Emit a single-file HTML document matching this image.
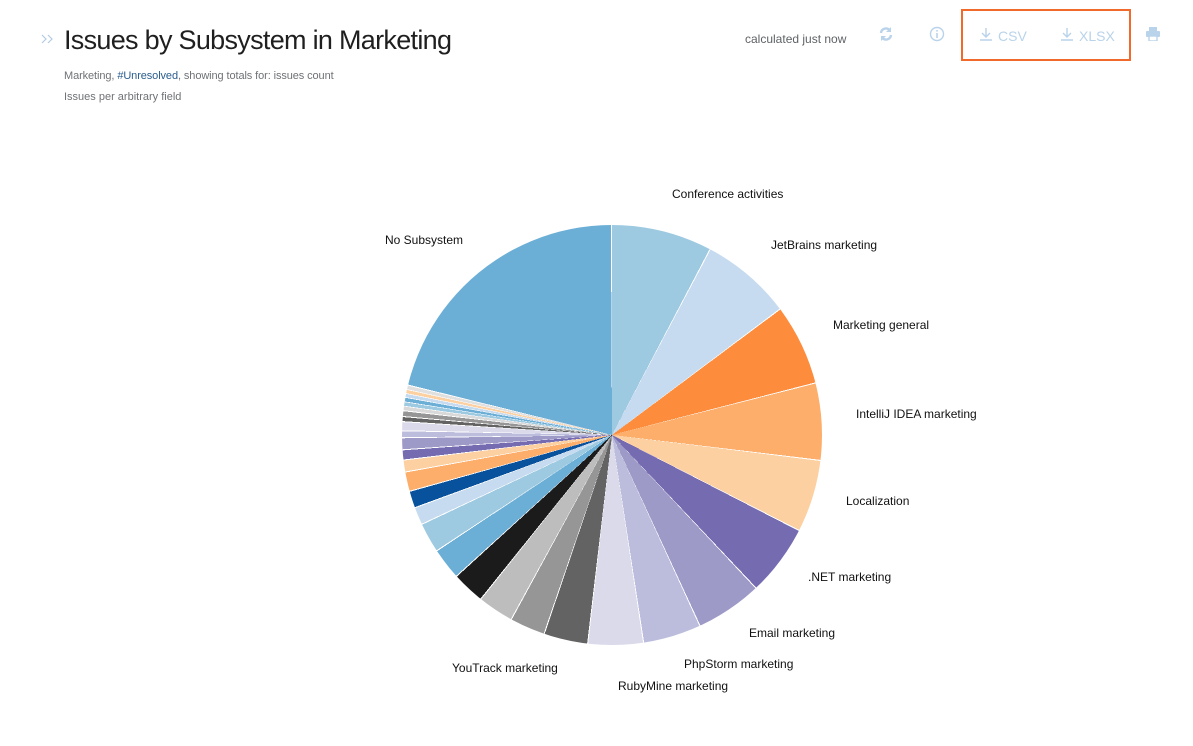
<!DOCTYPE html>
<html><head><meta charset="utf-8"><style>
body{margin:0;width:1193px;height:746px;background:#fff;font-family:"Liberation Sans",sans-serif;position:relative;overflow:hidden}
.a{position:absolute;white-space:nowrap}
.lbl{position:absolute;font-size:12px;color:#111;white-space:nowrap;line-height:14px}
.pie{position:absolute;left:402px;top:225px;width:420px;height:420px;border-radius:50%;
background:conic-gradient(from 0deg,
#9ecae1 0deg 27.7deg,#fff 27.7deg 28deg,
#c6dbef 28deg 53deg,#fff 53deg 53.3deg,
#fd8d3c 53.3deg 75.5deg,#fff 75.5deg 75.8deg,
#fdae6b 75.8deg 96.8deg,#fff 96.8deg 97.1deg,
#fdd0a2 97.1deg 116.9deg,#fff 116.9deg 117.2deg,
#756bb1 117.2deg 136.6deg,#fff 136.6deg 136.9deg,
#9e9ac8 136.9deg 155.1deg,#fff 155.1deg 155.4deg,
#bcbddc 155.4deg 171.2deg,#fff 171.2deg 171.5deg,
#dadaeb 171.5deg 186.5deg,#fff 186.5deg 186.8deg,
#636363 186.8deg 198.7deg,#fff 198.7deg 199deg,
#969696 199deg 208.5deg,#fff 208.5deg 208.8deg,
#bdbdbd 208.8deg 218.5deg,#fff 218.5deg 218.8deg,
#1b1b1b 218.8deg 227.6deg,#fff 227.6deg 227.9deg,
#6baed6 227.9deg 236.4deg,#fff 236.4deg 236.7deg,
#9ecae1 236.7deg 244.7deg,#fff 244.7deg 245deg,
#c6dbef 245deg 249.6deg,#fff 249.6deg 249.9deg,
#08519c 249.9deg 254.3deg,#fff 254.3deg 254.6deg,
#fdae6b 254.6deg 259.7deg,#fff 259.7deg 260deg,
#fdd0a2 260deg 263deg,#fff 263deg 263.3deg,
#756bb1 263.3deg 265.8deg,#fff 265.8deg 266.1deg,
#9e9ac8 266.1deg 269.1deg,#fff 269.1deg 269.4deg,
#bcbddc 269.4deg 271deg,#fff 271deg 271.3deg,
#dadaeb 271.3deg 273.5deg,#fff 273.5deg 273.8deg,
#636363 273.8deg 274.9deg,#fff 274.9deg 275.2deg,
#969696 275.2deg 276.5deg,#fff 276.5deg 276.8deg,
#d9d9d9 276.8deg 277.8deg,#fff 277.8deg 278deg,
#9ecae1 278deg 279deg,#fff 279deg 279.2deg,
#6baed6 279.2deg 280.2deg,#fff 280.2deg 280.4deg,
#c6dbef 280.4deg 281.3deg,#fff 281.3deg 281.5deg,
#fdd0a2 281.5deg 282.4deg,#fff 282.4deg 282.6deg,
#e0e0e0 282.6deg 283.6deg,#fff 283.6deg 283.9deg,
#6baed6 283.9deg 359.7deg,#fff 359.7deg 360deg)}
.ic{color:#b9d3ea}
</style></head><body>
<svg class="a" style="left:41px;top:34px" width="14" height="10" viewBox="0 0 14 10"><path d="M1 1l4 4-4 4M7 1l4 4-4 4" stroke="#b3cbe3" stroke-width="1.2" fill="none"/></svg>
<div class="a" style="left:64px;top:25px;font-size:27px;color:#1f1f1f;letter-spacing:-0.7px">Issues by Subsystem in Marketing</div>
<div class="a" style="left:64px;top:70px;font-size:11px;color:#6f7275;letter-spacing:-0.1px">Marketing, <span style="color:#2a5d8e">#Unresolved</span>, showing totals for: issues count</div>
<div class="a" style="left:64px;top:91px;font-size:11px;color:#6f7275">Issues per arbitrary field</div>
<div class="a" style="left:745px;top:32px;font-size:12px;color:#5f6366">calculated just now</div>
<svg class="a" style="left:878px;top:26px" width="16" height="16" viewBox="0 0 16 16"><path d="M3 7a5 5 0 0 1 9-2.5M13 9a5 5 0 0 1-9 2.5" stroke="#b9d3ea" stroke-width="2.4" fill="none"/><path d="M13 1v5h-5zM3 15v-5h5z" fill="#b9d3ea"/></svg>
<svg class="a" style="left:929px;top:26px" width="16" height="16" viewBox="0 0 16 16"><circle cx="8" cy="8" r="6.5" stroke="#b9d3ea" stroke-width="1.4" fill="none"/><rect x="7.2" y="7" width="1.6" height="5" fill="#b9d3ea"/><rect x="7.2" y="4" width="1.6" height="1.6" fill="#b9d3ea"/></svg>
<div class="a" style="left:961px;top:9px;width:166px;height:48px;border:2px solid #f26a2b"></div>
<svg class="a" style="left:979px;top:27px" width="14" height="15" viewBox="0 0 14 15"><path d="M7 1v9M3 6l4 4 4-4M1 13h12" stroke="#b9d3ea" stroke-width="1.4" fill="none"/></svg>
<div class="a ic" style="left:998px;top:28px;font-size:14px">CSV</div>
<svg class="a" style="left:1060px;top:27px" width="14" height="15" viewBox="0 0 14 15"><path d="M7 1v9M3 6l4 4 4-4M1 13h12" stroke="#b9d3ea" stroke-width="1.4" fill="none"/></svg>
<div class="a ic" style="left:1079px;top:28px;font-size:14px">XLSX</div>
<svg class="a" style="left:1145px;top:27px" width="16" height="14" viewBox="0 0 16 14"><rect x="4" y="0" width="8" height="4" fill="#b9d3ea"/><rect x="1" y="4" width="14" height="6" rx="1" fill="#b9d3ea"/><rect x="4" y="9" width="8" height="5" fill="#fff" stroke="#b9d3ea" stroke-width="1.4"/></svg>
<div class="pie"></div>
<div class="lbl" style="left:672px;top:187px">Conference activities</div>
<div class="lbl" style="left:385px;top:233px">No Subsystem</div>
<div class="lbl" style="left:771px;top:238px">JetBrains marketing</div>
<div class="lbl" style="left:833px;top:318px">Marketing general</div>
<div class="lbl" style="left:856px;top:407px">IntelliJ IDEA marketing</div>
<div class="lbl" style="left:846px;top:494px">Localization</div>
<div class="lbl" style="left:808px;top:570px">.NET marketing</div>
<div class="lbl" style="left:749px;top:626px">Email marketing</div>
<div class="lbl" style="left:684px;top:657px">PhpStorm marketing</div>
<div class="lbl" style="left:618px;top:679px">RubyMine marketing</div>
<div class="lbl" style="left:452px;top:661px">YouTrack marketing</div>
</body></html>
